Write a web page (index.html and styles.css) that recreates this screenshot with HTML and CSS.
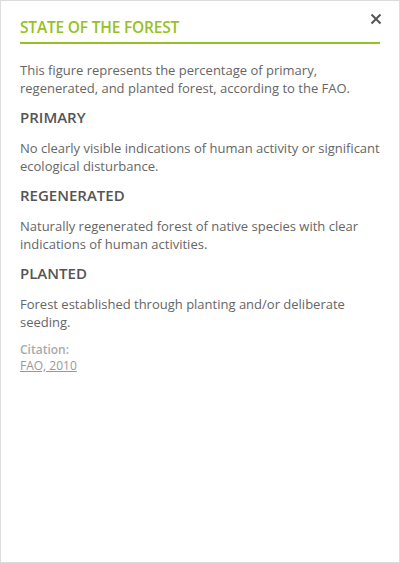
FILE: index.html
```html
<!DOCTYPE html>
<html>
<head>
<meta charset="utf-8">
<link rel="stylesheet" href="styles.css">
</head>
<body>
<div class="panel">
  <button class="close" aria-label="Close">
    <svg width="12" height="12" viewBox="0 0 12 12"><path d="M1.5 1.5 L10.5 10.5 M10.5 1.5 L1.5 10.5" stroke="#555" stroke-width="2" fill="none"/></svg>
  </button>
  <h1 class="title">STATE OF THE FOREST</h1>
  <p class="text">This figure represents the percentage of primary, regenerated, and planted forest, according to the FAO.</p>
  <h2 class="heading">PRIMARY</h2>
  <p class="text">No clearly visible indications of human activity or significant ecological disturbance.</p>
  <h2 class="heading">REGENERATED</h2>
  <p class="text">Naturally regenerated forest of native species with clear indications of human activities.</p>
  <h2 class="heading">PLANTED</h2>
  <p class="text">Forest established through planting and/or deliberate seeding.</p>
  <div class="citation">
    <div class="cite-label">Citation:</div>
    <a class="cite-link" href="#">FAO, 2010</a>
  </div>
</div>
</body>
</html>
```
FILE: styles.css
```css
* { box-sizing: border-box; }
html, body { margin: 0; padding: 0; background: #fff; }
body { font-family: "Open Sans", sans-serif; }
.panel {
  position: relative;
  width: 400px;
  height: 563px;
  border: 1px solid #dcdcdc;
  padding: 15px 19px 20px 19px;
  background: #fff;
}
.close {
  position: absolute;
  top: 12px;
  right: 17px;
  width: 12px;
  height: 12px;
  padding: 0;
  border: 0;
  background: none;
  cursor: pointer;
}
.close svg { display: block; }
.title {
  margin: 0 0 17px 0;
  font-size: 15.5px;
  letter-spacing: -0.2px;
  line-height: 22px;
  font-weight: 600;
  color: #95c125;
  padding-bottom: 4px;
  border-bottom: 2px solid #95c125;
}
.text {
  margin: 0 0 10px 0;
  font-size: 13px;
  line-height: 18px;
  color: #666;
}
.heading {
  margin: 0 0 12px 0;
  font-size: 15px;
  line-height: 20px;
  font-weight: 600;
  color: #555;
}
.citation { margin-top: 11px; font-size: 12px; line-height: 16px; }
.cite-label { color: #aaa; font-weight: 600; }
.cite-link { color: #999; text-decoration: underline; }
```
